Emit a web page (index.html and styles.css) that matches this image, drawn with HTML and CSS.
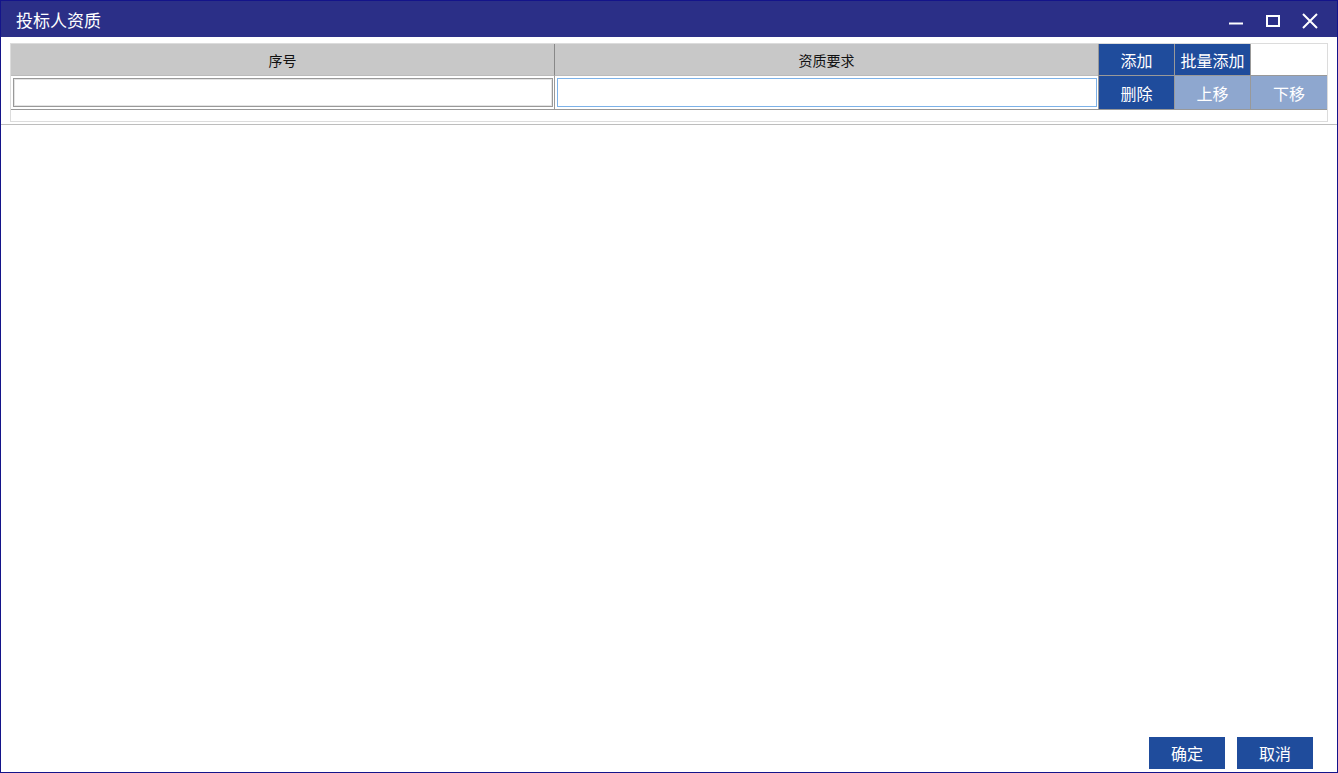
FILE: index.html
```html
<!DOCTYPE html>
<html lang="zh-CN">
<head>
    <meta charset="UTF-8">
    <title>投标人资质</title>
    <link rel="stylesheet" href="styles.css">
</head>
<body>
    <div class="window">
        <div class="titlebar">
            <span class="title">投标人资质</span>
            <div class="win-btns">
                <svg width="16" height="16" viewBox="0 0 16 16"><path d="M1 10.5h14" stroke="#fff" stroke-width="2"/></svg>
                <svg width="16" height="16" viewBox="0 0 16 16"><rect x="2" y="3" width="12" height="10" fill="none" stroke="#fff" stroke-width="2"/></svg>
                <svg width="16" height="16" viewBox="0 0 16 16"><path d="M1 1l14 14M15 1L1 15" stroke="#fff" stroke-width="2"/></svg>
            </div>
        </div>
        <div class="content">
            <div class="grid-wrap">
                <div class="grid">
                    <div class="th">序号</div>
                    <div class="th sep">资质要求</div>
                    <div class="btn dark top">添加</div>
                    <div class="btn dark top">批量添加</div>
                    <div class="blank"></div>

                    <div class="td"><input type="text" class="cell-input"></div>
                    <div class="td"><input type="text" class="cell-input focused"></div>
                    <div class="btn dark">删除</div>
                    <div class="btn light">上移</div>
                    <div class="btn light">下移</div>
                </div>
                <div class="grid-foot"></div>
            </div>
            <div class="divider"></div>
        </div>
        <div class="footer">
            <button class="action">确定</button>
            <button class="action">取消</button>
        </div>
    </div>
</body>
</html>
```

FILE: styles.css
```css
body {
    margin: 0;
    padding: 0;
    font-family: "Noto Sans CJK SC", "Noto Sans", sans-serif;
    background: #fff;
}
.window {
    width: 1338px;
    height: 773px;
    box-sizing: border-box;
    border: 1px solid #14148a;
    display: flex;
    flex-direction: column;
    overflow: hidden;
}
.titlebar {
    height: 36px;
    background: #2b2f87;
    color: #fff;
    display: flex;
    align-items: center;
    justify-content: space-between;
    padding: 0 19px 0 15px;
    flex-shrink: 0;
}
.title {
    font-size: 17px;
}
.win-btns {
    display: flex;
    gap: 21px;
    margin-top: 4px;
}
.content {
    flex: 1;
}
.grid-wrap {
    margin: 6px 9px 0 9px;
    border: 1px solid #dcdcdc;
}
.grid {
    display: grid;
    grid-template-columns: 543px 544px 76px 76px 77px;
    grid-template-rows: 32px 33px;
    border-bottom: 1px solid #999;
}
.th {
    background: #c8c8c8;
    font-size: 14px;
    color: #111;
    display: flex;
    align-items: center;
    justify-content: center;
    border-bottom: 1px solid #bbb;
}
.th.sep {
    border-left: 1px solid #888;
}
.td {
    display: flex;
    align-items: center;
    padding: 0 1px 0 2px;
}
.td + .td {
    border-left: 1px solid #999;
}
.cell-input {
    width: 100%;
    height: 29px;
    box-sizing: border-box;
    border: 1px solid #999;
    box-shadow: inset 0 0 0 1px #e4e4e4;
    outline: none;
}
.cell-input.focused {
    border-color: #7db2e8;
    box-shadow: none;
}
.btn {
    display: flex;
    align-items: center;
    justify-content: center;
    color: #fff;
    font-size: 16px;
    border-left: 1px solid #999;
    box-sizing: border-box;
}
.btn.top {
    border-bottom: 1px solid #999;
}
.btn.dark {
    background: #1f4c9c;
}
.btn.light {
    background: #8ea7cf;
}
.blank {
    background: #fff;
    border-left: 1px solid #999;
    border-bottom: 1px solid #999;
}
.grid-foot {
    height: 11px;
}
.divider {
    margin-top: 2px;
    border-top: 1px solid #bdbdbd;
}
.footer {
    display: flex;
    justify-content: flex-end;
    gap: 12px;
    padding: 0 24px 3px 0;
}
.action {
    width: 76px;
    height: 32px;
    border: none;
    background: #1f4c9c;
    color: #fff;
    font-family: "Noto Sans CJK SC", "Noto Sans", sans-serif;
    font-size: 16px;
    cursor: pointer;
    padding: 0;
}
```
